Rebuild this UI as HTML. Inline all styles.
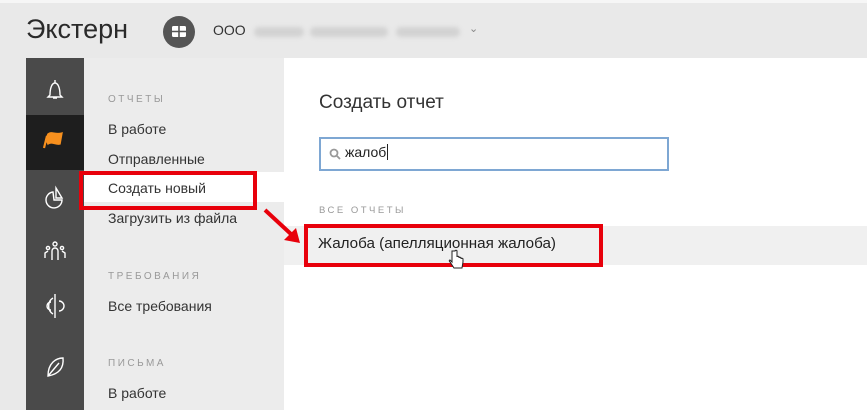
<!DOCTYPE html>
<html><head><meta charset="utf-8"><style>
*{margin:0;padding:0;box-sizing:border-box}
body{width:867px;height:410px;overflow:hidden;background:#e9e9e9;font-family:"Segoe UI","Liberation Sans","DejaVu Sans",sans-serif;position:relative;color:#222}
.abs{position:absolute}
.logo{left:26px;top:14px;font-size:27px;color:#2a2a2a}
.org{left:163px;top:16px;width:32px;height:32px;border-radius:50%;background:#555}
.blur{top:27px;height:10px;background:#d2d2d2;border-radius:5px;filter:blur(2px)}
.side{left:26px;top:58px;width:58px;height:352px;background:#4a4a4a}
.menu{left:84px;top:58px;width:200px;height:352px;background:#ececec}
.content{left:284px;top:58px;width:583px;height:352px;background:#fff}
.cap{font-size:10px;letter-spacing:2.5px;color:#999}
.item{font-size:14px;color:#333}
</style></head><body>
<div class="abs" style="left:0;top:0;width:867px;height:3px;background:#f6f6f6"></div>
<div class="abs logo">Экстерн</div>
<div class="abs org"><svg width="32" height="32"><rect x="9" y="10" width="14" height="11" rx="1.5" fill="#fff"/><path d="M9 15.5H23M16 10V21" stroke="#555" stroke-width="1.6"/></svg></div>
<div class="abs" style="left:213px;top:22px;font-size:14px;color:#333">ООО</div>
<div class="abs blur" style="left:254px;width:50px"></div>
<div class="abs blur" style="left:310px;width:78px"></div>
<div class="abs blur" style="left:396px;width:64px"></div>
<div class="abs" style="left:469px;top:22px;font-size:11px;color:#888">⌄</div>
<div class="abs side"></div>
<div class="abs" style="left:26px;top:115px;width:58px;height:55px;background:#1e1e1e"></div>
<svg class="abs" style="left:26px;top:58px" width="58" height="352" fill="none" stroke="#fff" stroke-width="1.4">
<path d="M24 37 C24 30 26 25 29 25 C32 25 34 30 34 37 L36 39 H22Z M27 40 H31"/><path d="M29 22v3"/>
<path d="M20 81 L22 76 C26 73 29 77 36 75 L34 86 C29 87 26 83 22 86Z" fill="#f7901e" stroke="#f7901e"/><path d="M21 78 L18 90" stroke="#f7901e" stroke-width="2.2"/>
<path d="M27 134 A8 8 0 1 0 36 142 H28Z M30 130 L36 140 H30Z"/>
<circle cx="29" cy="186" r="2"/><circle cx="22" cy="190" r="1.6"/><circle cx="36" cy="190" r="1.6"/><path d="M26 202v-9a3 3 0 0 1 6 0v9M19 200v-5l3-2M39 200v-5l-3-2"/>
<path d="M27 240 A8 9 0 0 0 27 256 M29 236v24M33 243a5 5 0 0 1 0 10M25 244a4 4 0 0 0 0 8"/>
<path d="M22 318 C22 305 30 300 37 300 C38 310 33 316 22 318Z M22 318 L33 305"/>
</svg>
<div class="abs menu"></div>
<div class="abs" style="left:84px;top:172px;width:200px;height:30px;background:#fff"></div>
<div class="abs cap" style="left:108px;top:94px">ОТЧЕТЫ</div>
<div class="abs item" style="left:108px;top:121px">В работе</div>
<div class="abs item" style="left:108px;top:151px">Отправленные</div>
<div class="abs item" style="left:108px;top:180px">Создать новый</div>
<div class="abs item" style="left:108px;top:210px">Загрузить из файла</div>
<div class="abs cap" style="left:108px;top:271px">ТРЕБОВАНИЯ</div>
<div class="abs item" style="left:108px;top:298px">Все требования</div>
<div class="abs cap" style="left:108px;top:358px">ПИСЬМА</div>
<div class="abs item" style="left:108px;top:385px">В работе</div>
<div class="abs content"></div>
<div class="abs" style="left:284px;top:226px;width:583px;height:39px;background:#f0f0f0"></div>
<div class="abs" style="left:319px;top:92px;font-size:19px;color:#333">Создать отчет</div>
<div class="abs" style="left:319px;top:137px;width:350px;height:34px;border:2px solid #7ea7d3"></div>
<svg class="abs" style="left:329px;top:148px" width="12" height="12" fill="none" stroke="#999" stroke-width="1.8"><circle cx="5" cy="5" r="3.5"/><path d="M7.5 7.5L11 11"/></svg>
<div class="abs" style="left:345px;top:144px;font-size:14px;color:#222">жалоб<span style="border-left:1px solid #222;margin-left:1px"></span></div>
<div class="abs cap" style="left:319px;top:205px;font-size:9.5px">ВСЕ ОТЧЕТЫ</div>
<div class="abs" style="left:318px;top:235px;font-size:15.2px;color:#222">Жалоба (апелляционная жалоба)</div>
<div class="abs" style="left:79px;top:171px;width:178px;height:39px;border:4px solid #e8000b"></div>
<div class="abs" style="left:304px;top:224px;width:299px;height:43px;border:4px solid #e8000b"></div>
<svg class="abs" style="left:260px;top:205px" width="45" height="45"><path d="M5 5 L32 30" stroke="#e8000b" stroke-width="4"/><path d="M40 38 L24 35 L36 23Z" fill="#e8000b"/></svg>
<svg class="abs" style="left:448px;top:249px" width="18" height="22"><path d="M4 2v11l-2-2c-1 0-1 1 0 2l4 6h8l1-6V10c0-1-2-1-2 0V9c0-1-2-1-2 0V8c0-1-2-1-2 0V2c0-1-2-1-2 0Z" fill="#fff" stroke="#222" stroke-width="1"/></svg>
</body></html>
